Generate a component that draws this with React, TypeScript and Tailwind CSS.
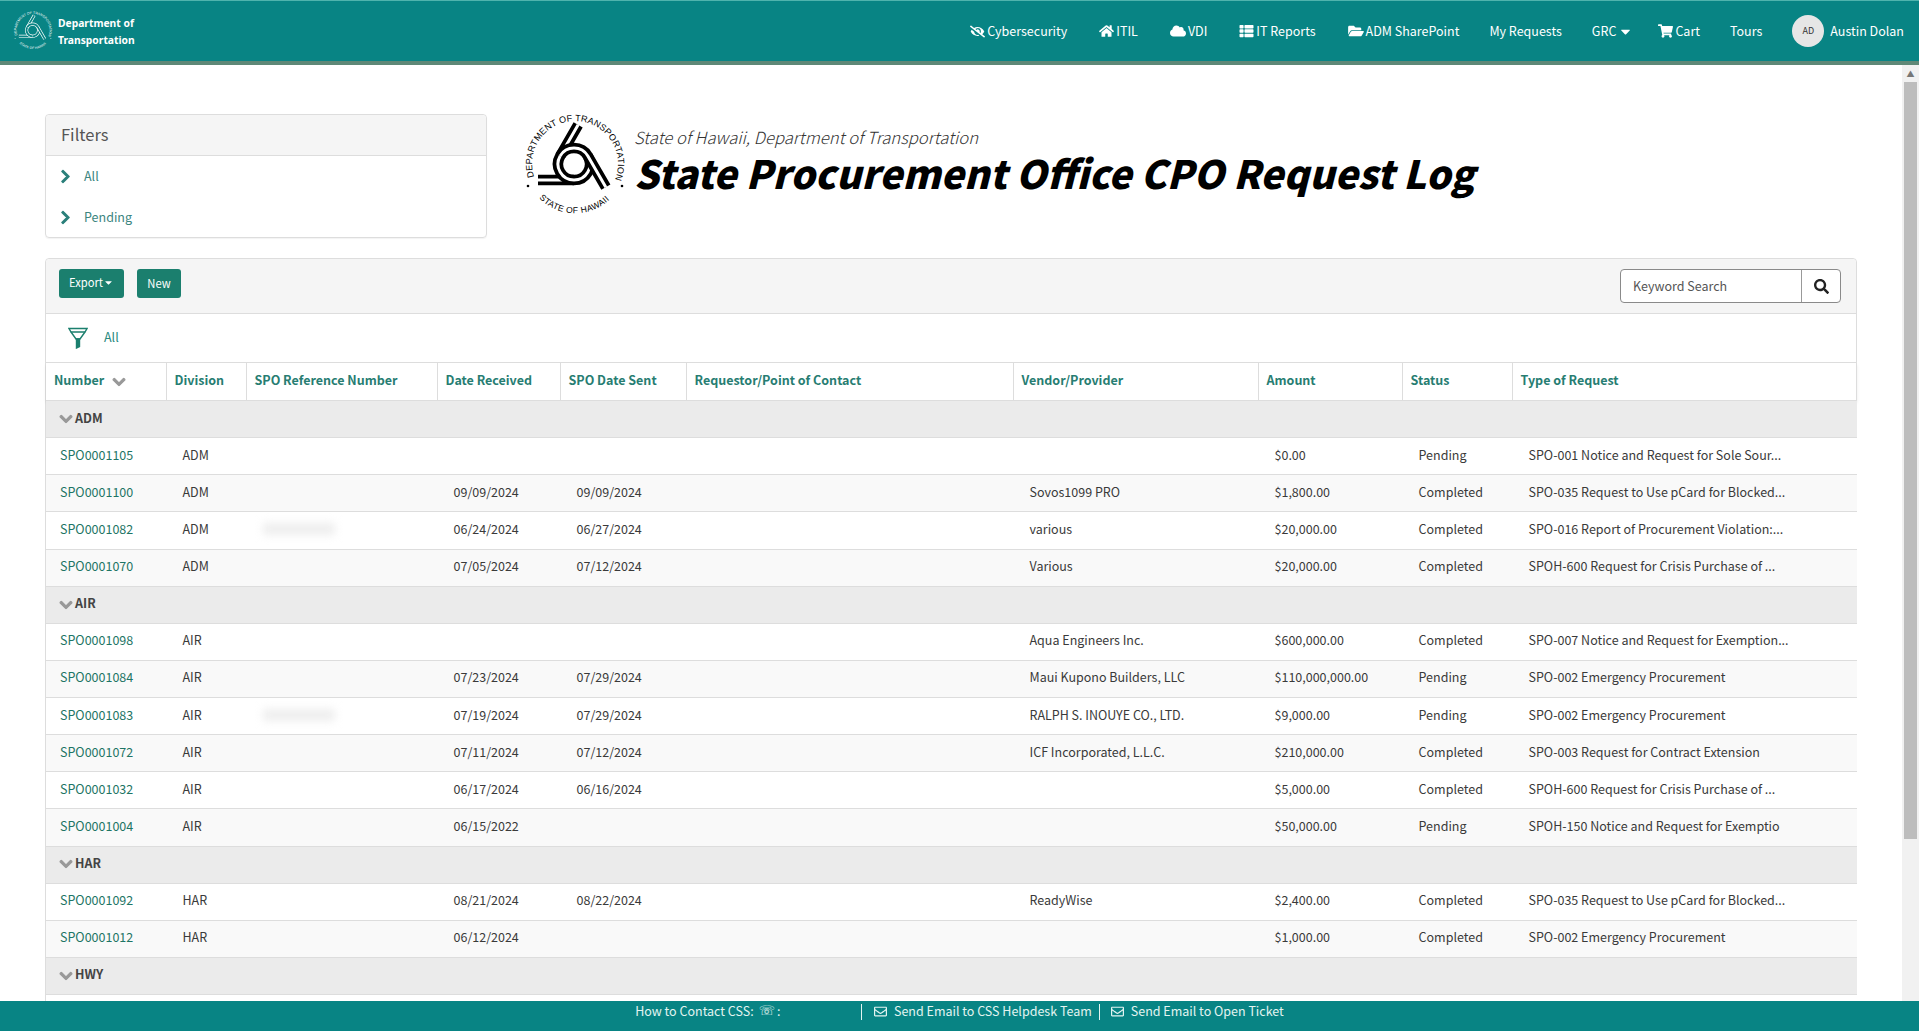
import React from "react";
import { FaEyeSlash, FaHome, FaCloud, FaThList, FaFolderOpen, FaShoppingCart, FaCaretDown, FaChevronRight, FaChevronDown, FaSearch, FaRegEnvelope } from "react-icons/fa";

const Seal = ({ color, bg, small }: { color: string; bg: string; small?: boolean }) => {
  const band = "M-36 16 L0 16 A16 16 0 0 0 13.86 -8";
  return (
    <svg viewBox="0 0 126 120" className={small ? "w-[48px] h-[46px] shrink-0" : "w-[126px] h-[120px] shrink-0"}>
      <defs>
        <path id={small ? "st" : "bt"} d="M22 71 A43 43 0 1 1 104 71" />
        <path id={small ? "sb" : "bb"} d="M27 92 A50 50 0 0 0 99 92" />
      </defs>
      <g transform="translate(62 58)" fill="none" strokeLinecap="butt">
        {[0, 120, 240].map((r) => (
          <g key={r} transform={`rotate(${r})`}>
            <path d={band} stroke={color} strokeWidth={small ? 8 : 10.5} />
            <path d={band} stroke={bg} strokeWidth={small ? 4.5 : 3} />
          </g>
        ))}
      </g>
      <text fill={color} fontFamily="'Liberation Sans',sans-serif" fontSize="9">
        <textPath href={small ? "#st" : "#bt"} textLength="164" lengthAdjust="spacing">DEPARTMENT OF TRANSPORTATION</textPath>
      </text>
      <text fill={color} fontFamily="'Liberation Sans',sans-serif" fontSize="8.6">
        <textPath href={small ? "#sb" : "#bb"} textLength="78" lengthAdjust="spacing">STATE OF HAWAII</textPath>
      </text>
      <circle cx="16" cy="80" r="1.3" fill={color} />
      <circle cx="110" cy="80" r="1.3" fill={color} />
    </svg>
  );
};

const nav = [
  { t: "Cybersecurity", i: <FaEyeSlash className="w-[15px] h-[13px]" />, ml: 0 },
  { t: "ITIL", i: <FaHome className="w-[15px] h-[14px]" />, ml: 32 },
  { t: "VDI", i: <FaCloud className="w-[16px] h-[14px]" />, ml: 32 },
  { t: "IT Reports", i: <FaThList className="w-[15px] h-[14px]" />, ml: 32 },
  { t: "ADM SharePoint", i: <FaFolderOpen className="w-[16px] h-[14px]" />, ml: 32 },
  { t: "My Requests", i: null, ml: 30 },
  { t: "GRC", i: null, ml: 30 },
  { t: "Cart", i: <FaShoppingCart className="w-[15px] h-[14px]" />, ml: 25 },
  { t: "Tours", i: null, ml: 30 },
];

type Row = string[];
const groups: { name: string; rows: Row[] }[] = [
  { name: "ADM", rows: [
    ["SPO0001105", "ADM", "", "", "", "", "", "$0.00", "Pending", "SPO-001 Notice and Request for Sole Sour..."],
    ["SPO0001100", "ADM", "", "09/09/2024", "09/09/2024", "", "Sovos1099 PRO", "$1,800.00", "Completed", "SPO-035 Request to Use pCard for Blocked..."],
    ["SPO0001082", "ADM", "*", "06/24/2024", "06/27/2024", "", "various", "$20,000.00", "Completed", "SPO-016 Report of Procurement Violation:..."],
    ["SPO0001070", "ADM", "", "07/05/2024", "07/12/2024", "", "Various", "$20,000.00", "Completed", "SPOH-600 Request for Crisis Purchase of ..."],
  ] },
  { name: "AIR", rows: [
    ["SPO0001098", "AIR", "", "", "", "", "Aqua Engineers Inc.", "$600,000.00", "Completed", "SPO-007 Notice and Request for Exemption..."],
    ["SPO0001084", "AIR", "", "07/23/2024", "07/29/2024", "", "Maui Kupono Builders, LLC", "$110,000,000.00", "Pending", "SPO-002 Emergency Procurement"],
    ["SPO0001083", "AIR", "*", "07/19/2024", "07/29/2024", "", "RALPH S. INOUYE CO., LTD.", "$9,000.00", "Pending", "SPO-002 Emergency Procurement"],
    ["SPO0001072", "AIR", "", "07/11/2024", "07/12/2024", "", "ICF Incorporated, L.L.C.", "$210,000.00", "Completed", "SPO-003 Request for Contract Extension"],
    ["SPO0001032", "AIR", "", "06/17/2024", "06/16/2024", "", "", "$5,000.00", "Completed", "SPOH-600 Request for Crisis Purchase of ..."],
    ["SPO0001004", "AIR", "", "06/15/2022", "", "", "", "$50,000.00", "Pending", "SPOH-150 Notice and Request for Exemptio"],
  ] },
  { name: "HAR", rows: [
    ["SPO0001092", "HAR", "", "08/21/2024", "08/22/2024", "", "ReadyWise", "$2,400.00", "Completed", "SPO-035 Request to Use pCard for Blocked..."],
    ["SPO0001012", "HAR", "", "06/12/2024", "", "", "", "$1,000.00", "Completed", "SPO-002 Emergency Procurement"],
  ] },
  { name: "HWY", rows: [["", "", "", "", "", "", "", "", "", ""]] },
];

const cols = ["Number", "Division", "SPO Reference Number", "Date Received", "SPO Date Sent", "Requestor/Point of Contact", "Vendor/Provider", "Amount", "Status", "Type of Request"];
const widths = [120, 80, 191, 123, 126, 327, 245, 144, 110, 345];

export default function App() {
  return (
    <div className="h-screen w-full flex flex-col overflow-hidden bg-white text-[12.5px] text-[#3a3a3a] font-['Noto_Sans_CJK_SC',sans-serif]">
      <header className="h-[65px] shrink-0 bg-[#088484] border-t border-t-[#4fb3ad] border-b-[4px] border-b-[#5f8877] flex items-center justify-between pl-[9px] pr-[15px]">
        <div className="flex items-center">
          <Seal color="#ffffff" bg="#088484" small />
          <div className="ml-[1px] pt-[1px] text-white font-bold text-[10.3px] leading-[17px] font-['Noto_Sans',sans-serif]">
            <div>Department of</div>
            <div>Transportation</div>
          </div>
        </div>
        <nav className="flex items-center text-white text-[12.5px] leading-[20px]">
          {nav.map((n) => (
            <div key={n.t} className="flex items-center gap-[2px]" style={{ marginLeft: n.ml }}>
              {n.i}
              <span>{n.t}</span>
              {n.t === "GRC" && <FaCaretDown className="w-[15px] h-[15px]" />}
            </div>
          ))}
          <div className="ml-[30px] w-[32px] h-[32px] rounded-full bg-[#e6e6e6] text-[#333] text-[9px] flex items-center justify-center">AD</div>
          <span className="ml-[6px]">Austin Dolan</span>
        </nav>
      </header>

      <div className="flex-1 min-h-0 flex">
        <main className="flex-1 min-w-0 overflow-hidden px-[45px] pt-[40px]">
          <div className="flex items-start">
            <section className="w-[442px] mt-[9px] border border-[#ddd] rounded-[4px] shrink-0 shadow-[0_1px_1px_rgba(0,0,0,0.05)]">
              <div className="h-[41px] bg-[#f5f5f5] border-b border-[#ddd] rounded-t-[4px] px-[15px] pb-[2px] flex items-center text-[16.5px] text-[#555]">Filters</div>
              <div className="h-[81px] flex flex-col gap-[1px] text-[#3b8580]">
                {["All", "Pending"].map((f) => (
                  <div key={f} className="h-[40px] flex items-center pl-[14px]">
                    <FaChevronRight className="w-[11px] h-[15px] text-[#2a7f7a]" strokeWidth={30} />
                    <span className="ml-[13px] leading-[20px]">{f}</span>
                  </div>
                ))}
              </div>
            </section>
            <div className="ml-[25px] -mr-[4px] mt-[1px]"><Seal color="#000000" bg="#ffffff" /></div>
            <div className="pt-[20px] text-black">
              <div className="text-[16.7px] leading-[24px] italic font-light text-[#333]">State of Hawaii, Department of Transportation</div>
              <div className="text-[39px] leading-[46px] italic font-black whitespace-nowrap">State Procurement Office CPO Request Log</div>
            </div>
          </div>

          <section className="mt-[20px] border border-[#ddd] rounded-[4px]">
            <div className="h-[55px] bg-[#f5f5f5] border-b border-[#ddd] rounded-t-[4px] flex items-start justify-between pl-[13px] pr-[15px] pt-[10px]">
              <div className="flex gap-[13px]">
                <button className="h-[29px] w-[65px] pb-[2px] rounded-[3px] bg-[#1b7f6e] text-white text-[11.2px] flex items-center justify-center">Export<FaCaretDown className="w-[11px] h-[11px]" /></button>
                <button className="h-[29px] w-[44px] pb-[1px] rounded-[3px] bg-[#1b7f6e] text-white text-[11.2px]">New</button>
              </div>
              <div className="flex h-[34px] w-[221px] bg-white border border-[#8a8a8a] rounded-[4px]">
                <div className="flex-1 flex items-center pl-[12px] pt-[1px] text-[#555] border-r border-[#999]">Keyword Search</div>
                <div className="w-[38px] flex items-center justify-center text-[#222]"><FaSearch className="w-[15px] h-[15px]" /></div>
              </div>
            </div>
            <div className="h-[48px] flex items-center pl-[22px] text-[#2a8a80]">
              <svg viewBox="0 0 20 22" className="w-[20px] h-[22px]" fill="none" stroke="#1b7f6e" strokeWidth="1.4">
                <path d="M1 1.5H19L17 5H3Z" />
                <path d="M3 5L8 12H12L17 5" />
                <path d="M8.5 12V21L11.5 19.5V12Z" fill="#1b7f6e" />
              </svg>
              <span className="ml-[16px] pb-[2px]">All</span>
            </div>
            <table className="w-full table-fixed border-collapse">
              <colgroup>
                {widths.map((w, i) => <col key={i} style={{ width: w }} />)}
              </colgroup>
              <thead>
                <tr className="h-[38px] border-t border-b border-[#ddd] shadow-[0_2px_3px_rgba(0,0,0,0.08)]">
                  {cols.map((c, i) => (
                    <th key={c} className={`text-left font-bold text-[#277d72] pl-[8px] py-0 ${i > 0 ? "border-l border-[#ddd]" : ""}`}>
                      <span className="inline-flex items-center pb-[2px]">
                        {c}
                        {i === 0 && <FaChevronDown className="ml-[8px] mt-[2px] w-[14px] h-[14px] text-[#999]" strokeWidth={40} />}
                      </span>
                    </th>
                  ))}
                </tr>
              </thead>
              <tbody>
                {groups.map((g) => (
                  <React.Fragment key={g.name}>
                    <tr className="h-[37.13px] bg-[#ebebeb] border-b border-[#ddd]">
                      <td colSpan={10} className="pl-[13px] pt-[1px] pb-0">
                        <span className="inline-flex items-center font-bold text-[#444]">
                          <FaChevronDown className="w-[14px] h-[14px] mt-[2px] text-[#999] mr-[2px]" strokeWidth={40} />
                          {g.name}
                        </span>
                      </td>
                    </tr>
                    {g.rows.map((r, ri) => (
                      <tr key={ri} className={`h-[37.13px] border-b border-[#ddd] ${ri % 2 ? "bg-[#f9f9f9]" : "bg-white"}`}>
                        {r.map((v, i) => (
                          <td key={i} className={`pt-0 pb-[3px] whitespace-nowrap overflow-hidden leading-[20px] ${i === 0 ? "pl-[14px] text-[#1e7565]" : "pl-[16.5px]"}`}>
                            {v === "*" ? <span className="block w-[72px] h-[12px] bg-[#eeeeee] blur-[4px]" /> : v}
                          </td>
                        ))}
                      </tr>
                    ))}
                  </React.Fragment>
                ))}
              </tbody>
            </table>
          </section>
        </main>
        <aside className="w-[17px] shrink-0 bg-[#f1f1f1] flex flex-col items-center">
          <div className="h-[17px] flex items-center text-[8px] text-[#777]">▲</div>
          <div className="w-[13px] h-[757px] bg-[#bdbdbd]" />
        </aside>
      </div>

      <footer className="h-[30px] shrink-0 bg-[#088484] flex justify-center pt-0 text-[#e3f4f1] text-[12.5px] leading-[20px]">
        <div className="flex items-start">
          <span>How to Contact CSS:</span>
          <span className="ml-[5px] text-[13px] font-['DejaVu_Sans',sans-serif]">☏</span>
          <span className="ml-[2px] w-[84px]">:</span>
          <span className="w-px h-[16px] mt-[3px] bg-[#e3f4f1]" />
          <FaRegEnvelope className="ml-[12px] mt-[4px] w-[13px] h-[13px]" />
          <span className="ml-[7px]">Send Email to CSS Helpdesk Team</span>
          <span className="ml-[7px] w-px h-[16px] mt-[3px] bg-[#e3f4f1]" />
          <FaRegEnvelope className="ml-[11px] mt-[4px] w-[13px] h-[13px]" />
          <span className="ml-[7px]">Send Email to Open Ticket</span>
        </div>
      </footer>
    </div>
  );
}
